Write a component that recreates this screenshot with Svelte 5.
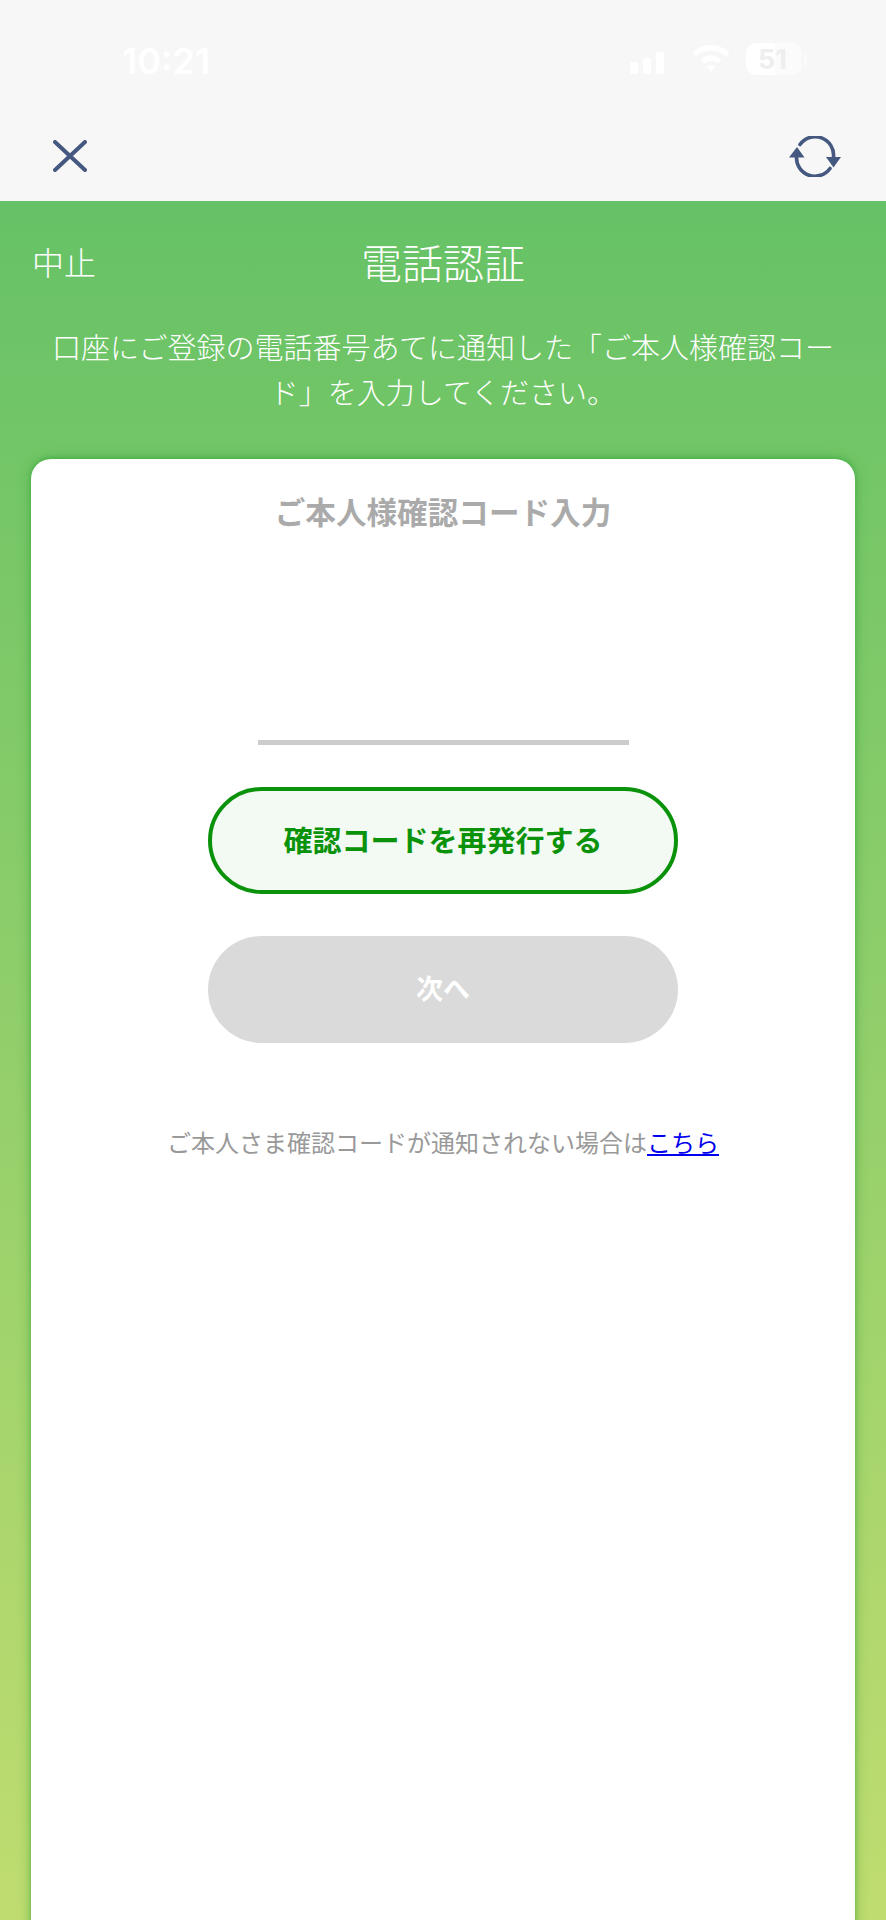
<script>
  const copy = '口座にご登録の電話番号あてに通知した「ご本人様確認コード」を入力してください。';
</script>

<div class="screen">
  <!-- Status bar + browser toolbar -->
  <header class="top">
    <div class="status">
      <span class="time">10:21</span>
      <div class="status-icons">
        <svg class="signal" width="46" height="22" viewBox="0 0 46 22" fill="#fff">
          <rect x="0" y="10" width="8" height="12" rx="2"/>
          <rect x="13" y="6" width="8" height="16" rx="2"/>
          <rect x="26" y="0" width="8" height="22" rx="2"/>
          <rect x="39" y="0" width="7" height="22" rx="2" opacity="0.1"/>
        </svg>
        <svg class="wifi" width="38" height="27" viewBox="0 0 38 27" fill="#fff">
          <path d="M19 0C12 0 5.500 2.700 0.500 7.500L4 11.500C8 7.700 13.300 5.500 19 5.500S30 7.700 34 11.500L37.500 7.500C32.500 2.700 26 0 19 0Z"/>
          <path d="M19 10.500C15 10.500 11.300 12 8.500 14.700L12 18.600C13.900 16.900 16.300 16 19 16S24.100 16.900 26 18.600L29.500 14.700C26.700 12 23 10.500 19 10.500Z"/>
          <path d="M19 20C17.300 20 15.800 20.700 14.800 21.800L19 27L23.200 21.800C22.200 20.700 20.700 20 19 20Z"/>
        </svg>
        <div class="battery">
          <div class="battery-body"><span>51</span></div>
          <div class="battery-nub"></div>
        </div>
      </div>
    </div>
    <div class="toolbar">
      <svg width="34" height="32" viewBox="0 0 34 32" fill="none" stroke="#45587f" stroke-width="4" stroke-linecap="round">
        <path d="M2 2l30 28M32 2L2 30"/>
      </svg>
      <svg width="52" height="41" viewBox="0 0 52 41" fill="none" stroke="#45587f" stroke-width="3.600" stroke-linecap="round">
        <path d="M11 8.500A18.500 18.500 0 0 1 44.500 21"/>
        <path d="M41 32.500A18.500 18.500 0 0 1 7.500 21"/>
        <path d="M0 21.500L8 11l7.500 10.500z" fill="#45587f" stroke="none"/>
        <path d="M37 21h15l-7.500 10.500z" fill="#45587f" stroke="none"/>
      </svg>
    </div>
  </header>

  <main class="green">
    <div class="nav">
      <span class="cancel">中止</span>
      <h1>電話認証</h1>
    </div>
    <p class="lead">{copy}</p>

    <section class="card">
      <h2>ご本人様確認コード入力</h2>
      <div class="field"></div>
      <button class="btn reissue">確認コードを再発行する</button>
      <button class="btn next">次へ</button>
      <p class="help">ご本人さま確認コードが通知されない場合は<a href="#help">こちら</a></p>
    </section>
  </main>
</div>

<style>
  :global(body) {
    margin: 0;
  }

  .screen {
    width: 886px;
    height: 1920px;
    overflow: hidden;
    display: flex;
    flex-direction: column;
    font-family: "Noto Sans CJK JP", "Liberation Sans", sans-serif;
  }

  /* ── Top ───────────────────────────────────────────────────────────────── */
  .top {
    height: 201px;
    flex-shrink: 0;
    background: #f7f7f7;
    box-sizing: border-box;
  }

  .status {
    height: 118px;
    padding: 41px 79px 0 122px;
    box-sizing: border-box;
    display: flex;
    justify-content: space-between;
    align-items: flex-start;
  }

  .time {
    font-family: Inter, "Liberation Sans", sans-serif;
    font-size: 36px;
    font-weight: 600;
    line-height: 40px;
    color: #fff;
  }

  .status-icons {
    display: flex;
    align-items: flex-start;
    gap: 16px;
  }

  .signal {
    margin-top: 11px;
  }

  .wifi {
    margin-top: 4px;
  }

  .battery {
    display: flex;
    align-items: center;
    gap: 2px;
    margin-top: 2px;
  }

  .battery-body {
    width: 56px;
    height: 32px;
    border-radius: 10px;
    background: linear-gradient(90deg, #fff 0 51%, #fbfbfb 51%);
    display: flex;
    align-items: center;
    padding-left: 12px;
    box-sizing: border-box;
  }
  .battery-body span {
    font-family: Inter, "Liberation Sans", sans-serif;
    font-size: 27px;
    font-weight: 700;
    color: #eee;
  }

  .battery-nub {
    width: 3px;
    height: 11px;
    border-radius: 0 2px 2px 0;
    background: #fbfbfb;
  }

  .toolbar {
    display: flex;
    justify-content: space-between;
    align-items: center;
    padding: 0 45px 0 53px;
    height: 76px;
  }

  /* ── Green panel ───────────────────────────────────────────────────────── */
  .green {
    flex: 1;
    background: linear-gradient(#66c266, #c2dd70);
    padding: 0 31px;
    color: #fff;
  }

  .nav {
    position: relative;
    height: 64px;
    margin-top: 28px;
    display: flex;
    align-items: center;
    justify-content: center;
  }

  .cancel {
    position: absolute;
    left: 1px;
    font-size: 32px;
    font-weight: 300;
  }

  h1 {
    margin: 0;
    font-size: 41px;
    font-weight: 300;
  }

  .lead {
    margin: 31px 0 45px;
    padding: 0 20px;
    font-size: 29px;
    font-weight: 300;
    line-height: 45px;
    text-align: center;
  }

  .card {
    height: 1500px;
    background: #fff;
    border-radius: 20px;
    box-shadow: 0 -1px 4px rgba(40, 165, 50, 0.55), 0 0 14px rgba(40, 150, 50, 0.4);
    display: flex;
    flex-direction: column;
    align-items: center;
  }

  h2 {
    margin: 30px 0 0;
    font-size: 30.600px;
    line-height: 44px;
    font-weight: 700;
    color: #aaa;
  }

  .field {
    width: 371px;
    height: 5px;
    margin-top: 207px;
    background: #ccc;
  }

  .btn {
    width: 470px;
    height: 107px;
    box-sizing: border-box;
    padding: 0 0 4px;
    border-radius: 54px;
    font-family: inherit;
    font-weight: 700;
    display: block;
  }

  .reissue {
    margin-top: 42px;
    background: #f3f9f3;
    border: 4px solid #0a930a;
    color: #0a930a;
    font-size: 29px;
  }

  .next {
    margin-top: 42px;
    background: #dadada;
    border: 0;
    color: #fff;
    font-size: 27px;
  }

  .help {
    margin: 82px 0 0;
    font-size: 24px;
    line-height: 34px;
    color: #999;
  }
  .help a {
    color: #0000ee;
    text-decoration: underline;
  }
</style>
